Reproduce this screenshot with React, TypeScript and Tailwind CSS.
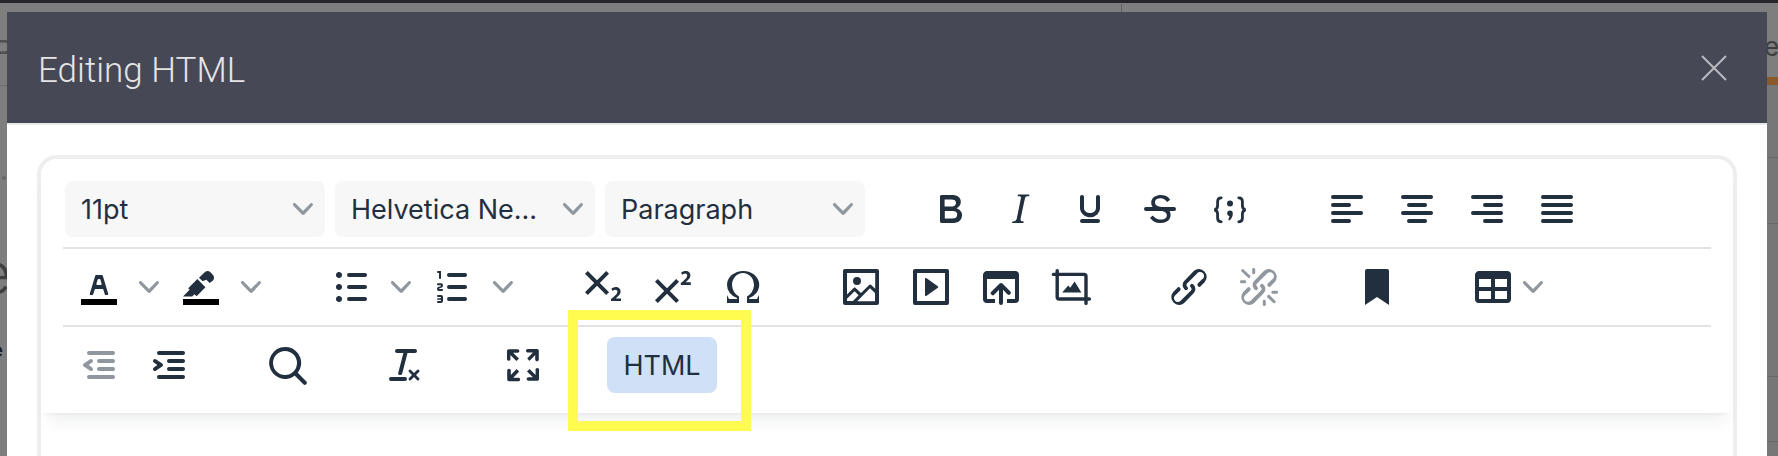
import type { ReactNode } from "react";

const sans = "font-['Inter',sans-serif]";

// toolbar icons, 24 unit grid drawn at 48px
const icons: Record<string, ReactNode> = {
  bold: <path fillRule="evenodd" d="M7.8 19c-.3 0-.5 0-.6-.2l-.2-.5V5.7c0-.2 0-.4.2-.5l.6-.2h5c1.5 0 2.7.3 3.5 1 .7.6 1.1 1.4 1.1 2.5a3 3 0 0 1-.6 1.9c-.4.6-1 1-1.6 1.2.4.1.9.3 1.3.6s.8.7 1 1.2c.4.4.5 1 .5 1.6 0 1.3-.4 2.3-1.3 3-.8.7-2.1 1-3.8 1H7.8Zm5-8.3c.6 0 1.2-.1 1.6-.5.4-.3.6-.7.6-1.3 0-1.1-.8-1.7-2.3-1.7H9.3v3.5h3.4Zm.5 6c.7 0 1.3-.1 1.7-.4.4-.4.6-.9.6-1.5s-.2-1-.7-1.4c-.4-.3-1-.4-2-.4H9.4v3.8h4Z" />,
  italic: <path fillRule="evenodd" d="m16.7 4.7-.1.9h-.3c-.6 0-1 0-1.4.3-.3.3-.4.6-.5 1.1l-2.1 9.8v.6c0 .5.4.8 1.4.8h.2l-.2.8H8l.2-.8h.2c1.1 0 1.8-.5 2-1.5l2-9.8.1-.5c0-.6-.4-.8-1.4-.8h-.3l.2-.9h5.8Z" />,
  underline: <path fillRule="evenodd" d="M16 5c.6 0 1 .4 1 1v5.5a4 4 0 0 1-.4 1.8l-1 1.4a5.3 5.3 0 0 1-5.5 1 5 5 0 0 1-1.6-1c-.5-.4-.8-.9-1.1-1.4a4 4 0 0 1-.4-1.8V6c0-.6.4-1 1-1s1 .4 1 1v5.5c0 .3 0 .6.2 1l.6.7a3.3 3.3 0 0 0 2.2.8 3.4 3.4 0 0 0 2.2-.8c.3-.2.4-.5.6-.8l.2-.9V6c0-.6.4-1 1-1ZM8 17h8c.6 0 1 .4 1 1s-.4 1-1 1H8a1 1 0 0 1 0-2Z" />,
  strike: (
    <>
      <path d="M15.6 8.5c-.5-.7-1-1.1-1.3-1.3-.6-.4-1.3-.6-2-.6-2.7 0-2.8 1.7-2.8 2.1 0 1.6 1.8 2 3.2 2.3 4.4.9 4.6 2.8 4.6 3.9 0 1.4-.7 4.1-5 4.1A6.2 6.2 0 0 1 7 16.4l1.5-1.1c.4.6 1.6 2 3.7 2 1.6 0 2.5-.4 3-1.2.4-.8.3-2-.8-2.6-.7-.4-1.6-.7-2.9-1-1-.2-3.9-.8-3.9-3.6C7.6 6 10.3 5 12.4 5c2.9 0 4.2 1.6 4.7 2.4l-1.5 1.1Z" />
      <path d="M5 11h14a1 1 0 0 1 0 2H5a1 1 0 0 1 0-2Z" />
    </>
  ),
  code: (
    <>
      <path fill="none" stroke="currentColor" strokeWidth="1.4" strokeLinecap="round" d="M7.6 6.4C6.3 6.4 5.8 7.2 5.8 8.3v2c0 1-.6 1.9-1.6 2.100 1 .2 1.6 1.100 1.600 2.100v2c0 1.100.5 1.900 1.800 1.900M16.400 6.400c1.300 0 1.800.8 1.800 1.900v2c0 1 .6 1.900 1.600 2.100-1 .2-1.600 1.100-1.600 2.100v2c0 1.100-.5 1.900-1.800 1.900" />
      <circle cx="12" cy="9.300" r="1.500" />
      <path d="M10.600 14.200a1.400 1.400 0 0 1 2.800 0c0 1.500-.7 2.700-1.700 3.500l-.6-.5c.4-.5.6-1.100.6-1.700-.6-.1-1.100-.6-1.100-1.300Z" />
    </>
  ),
  alignLeft: <path d="M5 5h14c.6 0 1 .4 1 1s-.4 1-1 1H5a1 1 0 1 1 0-2Zm0 4h8c.6 0 1 .4 1 1s-.4 1-1 1H5a1 1 0 1 1 0-2Zm0 8h8c.6 0 1 .4 1 1s-.4 1-1 1H5a1 1 0 0 1 0-2Zm0-4h14c.6 0 1 .4 1 1s-.4 1-1 1H5a1 1 0 0 1 0-2Z" />,
  alignCenter: <path d="M5 5h14c.6 0 1 .4 1 1s-.4 1-1 1H5a1 1 0 1 1 0-2Zm3 4h8c.6 0 1 .4 1 1s-.4 1-1 1H8a1 1 0 1 1 0-2Zm0 8h8c.6 0 1 .4 1 1s-.4 1-1 1H8a1 1 0 0 1 0-2Zm-3-4h14c.6 0 1 .4 1 1s-.4 1-1 1H5a1 1 0 0 1 0-2Z" />,
  alignRight: <path d="M5 5h14c.6 0 1 .4 1 1s-.4 1-1 1H5a1 1 0 1 1 0-2Zm6 4h8c.6 0 1 .4 1 1s-.4 1-1 1h-8a1 1 0 0 1 0-2Zm0 8h8c.6 0 1 .4 1 1s-.4 1-1 1h-8a1 1 0 0 1 0-2Zm-6-4h14c.6 0 1 .4 1 1s-.4 1-1 1H5a1 1 0 0 1 0-2Z" />,
  alignJustify: <path d="M5 5h14c.6 0 1 .4 1 1s-.4 1-1 1H5a1 1 0 1 1 0-2Zm0 4h14c.6 0 1 .4 1 1s-.4 1-1 1H5a1 1 0 1 1 0-2Zm0 4h14c.6 0 1 .4 1 1s-.4 1-1 1H5a1 1 0 0 1 0-2Zm0 4h14c.6 0 1 .4 1 1s-.4 1-1 1H5a1 1 0 0 1 0-2Z" />,
  textColor: (
    <>
      <path fill="#000" d="M3 18h18v3H3z" />
      <path fillRule="evenodd" d="M8.7 16h-.8a.5.5 0 0 1-.5-.6l2.7-9c.1-.3.3-.4.5-.4h2.8c.2 0 .4.1.5.4l2.7 9a.5.5 0 0 1-.5.6h-.8a.5.5 0 0 1-.4-.4l-.7-2.2c0-.3-.3-.4-.5-.4h-3.4c-.2 0-.4.1-.5.4l-.7 2.2c0 .3-.2.4-.4.4Zm2.6-7.6-.6 2a.5.5 0 0 0 .5.6h1.6a.5.5 0 0 0 .5-.6l-.6-2c0-.3-.3-.4-.5-.4h-.4c-.2 0-.4.1-.5.4Z" />
    </>
  ),
  highlight: (
    <>
      <path fill="#000" d="M3 18h18v3H3z" />
      <path d="M7.7 16.7H3l3.3-3.3-.7-.8L10.2 8l4 4.1-4 4.2c-.2.2-.6.2-.8 0l-.7-.7-1 1v.1Zm5-7.7L11 7.4l3-2.9a2 2 0 0 1 2.6 0L18 6c.7.7.7 2 0 2.7L16.3 10l-1.6-1.6L13 9Z" />
    </>
  ),
  bullets: <path fillRule="evenodd" d="M11 5h8c.6 0 1 .4 1 1s-.4 1-1 1h-8a1 1 0 0 1 0-2Zm0 6h8c.6 0 1 .4 1 1s-.4 1-1 1h-8a1 1 0 0 1 0-2Zm0 6h8c.6 0 1 .4 1 1s-.4 1-1 1h-8a1 1 0 0 1 0-2ZM4.5 6c0-.4.1-.8.4-1 .3-.4.7-.5 1.1-.5s.8.1 1 .4c.4.3.5.7.5 1.1s-.1.8-.4 1c-.3.4-.7.5-1.1.5s-.8-.1-1-.4c-.4-.3-.5-.7-.5-1.1Zm0 6c0-.4.1-.8.4-1 .3-.4.7-.5 1.1-.5s.8.1 1 .4c.4.3.5.7.5 1.1s-.1.8-.4 1c-.3.4-.7.5-1.1.5s-.8-.1-1-.4c-.4-.3-.5-.7-.5-1.1Zm0 6c0-.4.1-.8.4-1 .3-.4.7-.5 1.1-.5s.8.1 1 .4c.4.3.5.7.5 1.1s-.1.8-.4 1c-.3.4-.7.5-1.1.5s-.8-.1-1-.4c-.4-.3-.5-.7-.5-1.1Z" />,
  numbers: <path fillRule="evenodd" d="M10 17h8c.6 0 1 .4 1 1s-.4 1-1 1h-8a1 1 0 0 1 0-2Zm0-6h8c.6 0 1 .4 1 1s-.4 1-1 1h-8a1 1 0 0 1 0-2Zm0-6h8c.6 0 1 .4 1 1s-.4 1-1 1h-8a1 1 0 1 1 0-2ZM6 4v3.5c0 .3-.2.5-.5.5a.5.5 0 0 1-.5-.5V5h-.5a.5.5 0 0 1 0-1H6Zm-1 8.8.2.2h1.3c.3 0 .5.2.5.5s-.2.5-.5.5H4.9a1 1 0 0 1-.9-1V13c0-.4.3-.8.6-1l1.2-.4.2-.3a.2.2 0 0 0-.2-.2H4.5a.5.5 0 0 1-.5-.5c0-.3.2-.5.5-.5h1.6c.5 0 .9.4.9 1v.1c0 .4-.3.8-.6 1l-1.2.4-.2.3ZM7 17v2c0 .6-.4 1-1 1H4.5a.5.5 0 0 1 0-1h1.2c.2 0 .3-.1.3-.3 0-.2-.1-.3-.3-.3H4.4a.4.4 0 1 1 0-.8h1.3c.2 0 .3-.1.3-.3 0-.2-.1-.3-.3-.3H4.5a.5.5 0 1 1 0-1H6c.6 0 1 .4 1 1Z" />,
  subscript: <path d="m10.4 10 4.6 4.6-1.4 1.4L9 11.4 4.4 16 3 14.6 7.6 10 3 5.4 4.4 4 9 8.6 13.6 4 15 5.4 10.4 10ZM21 19h-5v-1l1-.8 1.7-1.6c.3-.4.5-.8.5-1.2 0-.3 0-.6-.2-.7-.2-.2-.5-.3-.9-.3a2 2 0 0 0-.8.2l-.7.3-.4-1.1 1-.6 1.2-.2c.8 0 1.4.3 1.8.7.4.4.6.9.6 1.5s-.2 1.1-.5 1.6a8 8 0 0 1-1.3 1.3l-.6.6h2.6V19Z" />,
  superscript: <path d="M15 9.4 10.4 14l4.6 4.6-1.4 1.4L9 15.4 4.4 20 3 18.6 7.6 14 3 9.4 4.4 8 9 12.6 13.6 8 15 9.4Zm5.9 1.6h-5v-1l1-.8 1.7-1.6c.3-.5.5-.9.5-1.3 0-.3 0-.5-.2-.7-.2-.2-.5-.3-.9-.3l-.8.2-.7.4-.4-1.2c.2-.2.5-.4 1-.5.3-.2.8-.2 1.2-.2.8 0 1.4.2 1.8.6.4.4.6 1 .6 1.6 0 .5-.2 1-.5 1.5l-1.3 1.4-.6.5h2.6V11Z" />,
  omega: <path fillRule="evenodd" d="M15 18h4l1-2v4h-6v-3.3l1.4-1a6 6 0 0 0 1.8-2.9 6.3 6.3 0 0 0-.1-4.1 5.8 5.8 0 0 0-3-3.2c-.6-.3-1.3-.5-2.1-.5a5.1 5.1 0 0 0-3.9 1.8 6.3 6.3 0 0 0-1.3 6 6.2 6.2 0 0 0 1.8 3l1.4.9V20H4v-4l1 2h4v-.5l-2-1L5.4 15A6.5 6.5 0 0 1 4 11c0-1 .2-1.9.6-2.7A7 7 0 0 1 6.3 6C7.1 5.4 8 5 9 4.5c1-.3 2-.5 3.1-.5a8.8 8.8 0 0 1 5.7 2 7 7 0 0 1 1.7 2.3 6 6 0 0 1 .2 4.8c-.2.7-.6 1.3-1 1.9a7.6 7.6 0 0 1-3.6 2.5v.5Z" />,
  image: <path d="m5 15.7 3.3-3.2c.3-.3.7-.3 1 0L12 15l4.1-4c.3-.4.8-.4 1 0l2 1.9V5H5v10.7ZM5 18V19h3l2.8-2.9-2-2L5 17.9Zm14-3-2.5-2.4-6.4 6.5H19v-4ZM4 3h16c.6 0 1 .4 1 1v16c0 .6-.4 1-1 1H4a1 1 0 0 1-1-1V4c0-.6.4-1 1-1Zm6 8a2 2 0 1 0 0-4 2 2 0 0 0 0 4Z" />,
  media: <path d="M4 3h16c.6 0 1 .4 1 1v16c0 .6-.4 1-1 1H4a1 1 0 0 1-1-1V4c0-.6.4-1 1-1Zm1 2v14h14V5H5Zm4.8 2.6 5.6 4a.5.5 0 0 1 0 .8l-5.6 4A.5.5 0 0 1 9 16V8a.5.5 0 0 1 .8-.4Z" />,
  browse: <path d="M19 4a2 2 0 0 1 2 2v12a2 2 0 0 1-2 2h-4v-2h4V8H5v10h4v2H5a2 2 0 0 1-2-2V6c0-1.1.9-2 2-2h14Zm-8 9.4-2.3 2.3a1 1 0 1 1-1.4-1.4l4-4a1 1 0 0 1 1.4 0l4 4a1 1 0 0 1-1.4 1.4L13 13.4V20a1 1 0 0 1-2 0v-6.6Z" />,
  crop: (
    <>
      <path fill="none" stroke="currentColor" strokeWidth="1.7" strokeLinecap="round" strokeLinejoin="round" d="M3.2 5.7h15.3a1 1 0 0 1 1 1v13.5M5.100 3.800V17a1 1 0 0 0 1 1h15.100" />
      <path d="m7.6 14.8 3-3.6 1 1.2 2.2-3.2 3.4 5.6H7.6Z" />
    </>
  ),
  link: <path d="M6.2 12.3a1 1 0 0 1 1.4 1.4l-2 2a2 2 0 1 0 2.6 2.8l4.8-4.8a1 1 0 0 0 0-1.4 1 1 0 1 1 1.4-1.3 2.9 2.9 0 0 1 0 4L9.6 20a3.9 3.9 0 0 1-5.5-5.5l2-2Zm11.6-.6a1 1 0 0 1-1.4-1.4l2-2a2 2 0 1 0-2.6-2.8L11 10.3a1 1 0 0 0 0 1.4A1 1 0 1 1 9.6 13a2.9 2.9 0 0 1 0-4L14.4 4a3.9 3.9 0 0 1 5.5 5.5l-2 2Z" />,
  unlink: <path d="M6.2 12.3a1 1 0 0 1 1.4 1.4l-2.1 2a2 2 0 1 0 2.7 2.8l4.8-4.8a1 1 0 0 0 0-1.4 1 1 0 1 1 1.4-1.3 2.9 2.9 0 0 1 0 4L9.6 20a3.9 3.9 0 0 1-5.5-5.5l2-2Zm11.6-.6a1 1 0 0 1-1.4-1.4l2.1-2a2 2 0 1 0-2.7-2.8L11 10.3a1 1 0 0 0 0 1.4A1 1 0 1 1 9.6 13a2.9 2.9 0 0 1 0-4L14.4 4a3.9 3.9 0 0 1 5.5 5.5l-2 2ZM7.6 6.3a.8.8 0 0 1-1 1.1L3.3 4.2a.7.7 0 1 1 1-1l3.2 3.1ZM5.1 8.6a.8.8 0 0 1 0 1.5H3a.8.8 0 0 1 0-1.5H5Zm5-3.5a.8.8 0 0 1-1.5 0V3a.8.8 0 0 1 1.5 0v2Zm6 11.8a.8.8 0 0 1 1-1l3.2 3.2a.8.8 0 0 1-1 1L16 17Zm-2.2 2a.8.8 0 0 1 1.5 0V21a.8.8 0 0 1-1.5 0V19Zm5-3.5a.7.7 0 1 1 0-1.5H21a.8.8 0 0 1 0 1.5H19Z" />,
  bookmark: <path d="M6 4v17l6-4 6 4V4c0-.6-.4-1-1-1H7a1 1 0 0 0-1 1Z" />,
  table: <path d="M19 4a2 2 0 0 1 2 2v12a2 2 0 0 1-2 2H5a2 2 0 0 1-2-2V6c0-1.1.9-2 2-2h14ZM5 14v4h6v-4H5Zm14 0h-6v4h6v-4Zm0-6h-6v4h6V8ZM5 12h6V8H5v4Z" />,
  outdent: <path fillRule="evenodd" d="M7 5h12c.6 0 1 .4 1 1s-.4 1-1 1H7a1 1 0 1 1 0-2Zm5 4h7c.6 0 1 .4 1 1s-.4 1-1 1h-7a1 1 0 0 1 0-2Zm0 4h7c.6 0 1 .4 1 1s-.4 1-1 1h-7a1 1 0 0 1 0-2Zm-5 4h12a1 1 0 0 1 0 2H7a1 1 0 0 1 0-2Zm1.6-3.8a1 1 0 0 1-1.2 1.6l-3-2a1 1 0 0 1 0-1.6l3-2a1 1 0 0 1 1.2 1.6L6.8 12l1.8 1.2Z" />,
  indent: <path fillRule="evenodd" d="M7 5h12c.6 0 1 .4 1 1s-.4 1-1 1H7a1 1 0 1 1 0-2Zm5 4h7c.6 0 1 .4 1 1s-.4 1-1 1h-7a1 1 0 0 1 0-2Zm0 4h7c.6 0 1 .4 1 1s-.4 1-1 1h-7a1 1 0 0 1 0-2Zm-5 4h12a1 1 0 0 1 0 2H7a1 1 0 0 1 0-2Zm-2.6-3.8L6.2 12l-1.8-1.2a1 1 0 0 1 1.2-1.6l3 2a1 1 0 0 1 0 1.6l-3 2a1 1 0 1 1-1.2-1.6Z" />,
  search: <path d="M16 17.3a8 8 0 1 1 1.4-1.4l4.3 4.4a1 1 0 0 1-1.4 1.4l-4.4-4.3Zm-5-.3a6 6 0 1 0 0-12 6 6 0 0 0 0 12Z" />,
  clear: <path fillRule="evenodd" d="M13.2 6a1 1 0 0 1 0 .2l-2.6 10a1 1 0 0 1-1 .8h-.2a.8.8 0 0 1-.8-1l2.6-10H8a1 1 0 1 1 0-2h9a1 1 0 0 1 0 2h-3.8ZM5 18h7a1 1 0 0 1 0 2H5a1 1 0 0 1 0-2Zm13 1.5L16.5 18 15 19.5a.7.7 0 0 1-1-1l1.5-1.5-1.5-1.5a.7.7 0 0 1 1-1l1.5 1.5 1.5-1.5a.7.7 0 0 1 1 1L17.5 17l1.5 1.5a.7.7 0 0 1-1 1Z" />,
  fullscreen: <path d="m15.3 10-1.2-1.3 2.9-3h-2.3a.9.9 0 1 1 0-1.7H19c.5 0 .9.4.9.9v4.4a.9.9 0 1 1-1.8 0V7l-2.9 3Zm0 4 3 3v-2.3a.9.9 0 1 1 1.7 0V19c0 .5-.4.9-.9.9h-4.4a.9.9 0 1 1 0-1.8H17l-3-2.9 1.3-1.2ZM10 15.4l-2.9 3h2.3a.9.9 0 1 1 0 1.7H5a.9.9 0 0 1-.9-.9v-4.4a.9.9 0 1 1 1.8 0V17l2.9-3 1.2 1.3ZM8.7 10 5.7 7v2.3a.9.9 0 0 1-1.7 0V5c0-.5.4-.9.9-.9h4.4a.9.9 0 0 1 0 1.8H7l3 2.9-1.3 1.2Z" />,
};

const Chevron = () => (
  <svg viewBox="0 0 10 10" className="w-5 h-5 fill-[#91979e]">
    <path d="M8.7 2.2c.3-.3.8-.3 1 0 .4.4.4.9 0 1.2L5.7 7.8c-.3.3-.9.3-1.2 0L.2 3.4a.8.8 0 0 1 0-1.2c.3-.3.8-.3 1.1 0L5 6l3.7-3.8Z" />
  </svg>
);

const Btn = ({ name, off }: { name: string; off?: boolean }) => (
  <div className={`w-[70px] h-[56px] flex items-center justify-center shrink-0 ${off ? "text-[#91979e]" : "text-[#222f3e]"}`}>
    <svg viewBox="0 0 24 24" className="w-12 h-12 fill-current">
      {icons[name]}
    </svg>
  </div>
);

const Split = ({ name }: { name: string }) => (
  <div className="flex items-center">
    <Btn name={name} />
    <div className="w-[30px] flex justify-center">
      <Chevron />
    </div>
  </div>
);

const Select = ({ label }: { label: string }) => (
  <div className="w-[260px] h-[56px] bg-[#f7f7f7] rounded-lg pl-4 pr-3 flex items-center justify-between text-[27px] text-[#222f3e]">
    <span className="pt-[2px]">{label}</span>
    <Chevron />
  </div>
);

const App = () => {
  return (
    <div className={`relative w-full h-screen overflow-hidden bg-[#7e7e7e] ${sans}`}>
      {/* page behind the backdrop, only slivers show */}
      <span className="absolute left-[-6px] top-[36px] text-[30px] leading-none text-[#4f4f4f]">P</span>
      <div className="absolute left-0 top-[85px] w-[7px] h-px bg-[#6c6c6c]"></div>
      <div className="absolute left-[2px] top-[176px] w-[4px] h-[4px] rounded-full bg-[#6a6a6a]"></div>
      <span className="absolute left-[-22px] top-[244px] text-[58px] font-light leading-none text-[#3f3f3f]">e</span>
      <span className="absolute left-[-9px] top-[340px] text-[20px] font-bold leading-none text-[#1e1e1e]">e</span>
      <span className="absolute left-[1764px] top-[34px] text-[26px] leading-none text-[#3d3d3d]">es</span>
      <div className="absolute right-0 top-[77px] w-[11px] h-[8px] bg-[#8b5a2b]"></div>
      <div className="absolute right-0 top-[85px] bottom-0 w-[11px] bg-[#777777]"></div>
      <div className="absolute right-0 top-[157px] w-[11px] h-px bg-[#686868]"></div>
      <div className="absolute right-0 top-[223px] w-[11px] h-px bg-[#686868]"></div>
      <div className="absolute right-0 top-[376px] w-[11px] h-px bg-[#686868]"></div>
      <div className="absolute right-0 top-[441px] w-[11px] h-px bg-[#686868]"></div>
      <div className="absolute left-[1121px] top-[4px] w-px h-[8px] bg-[#606060]"></div>

      <div className="relative h-[3px] bg-[#25252e]"></div>

      {/* Modal */}
      <div className="relative mt-[9px] ml-[7px] mr-[11px] h-[444px] flex flex-col bg-white">
        <div className="h-[113px] shrink-0 bg-[#464855] border-b-2 border-[#e9e9ec] pl-[31px] pr-[40px] flex items-center justify-between">
          <h1 className="font-['Roboto',sans-serif] font-light text-[35px] text-[#e4e4e7] pt-2">Editing HTML</h1>
          <svg viewBox="0 0 26 26" className="w-[26px] h-[26px] stroke-[#b9babf]" strokeWidth="2">
            <path d="M1 1l24 24M25 1 1 25" />
          </svg>
        </div>

        <div className="flex-1 px-[30px] pt-[30px] flex flex-col">
          {/* Editor */}
          <div className="flex-1 border-[4px] border-b-0 border-[#eeeeee] rounded-t-[20px]">
            <div className="bg-white rounded-t-[16px] px-[22px] pt-3 pb-[10px] shadow-[0_4px_4px_-4px_rgba(34,47,62,0.1),0_16px_16px_-8px_rgba(34,47,62,0.07)]">
              <div className="h-[78px] border-b-2 border-[#e3e3e3] flex items-center pl-px">
                <div className="flex gap-[10px] ml-px">
                  <Select label="11pt" />
                  <Select label="Helvetica Ne..." />
                  <Select label="Paragraph" />
                </div>
                <div className="flex ml-[50px]">
                  <Btn name="bold" />
                  <Btn name="italic" />
                  <Btn name="underline" />
                  <Btn name="strike" />
                  <Btn name="code" />
                </div>
                <div className="flex ml-[47px]">
                  <Btn name="alignLeft" />
                  <Btn name="alignCenter" />
                  <Btn name="alignRight" />
                  <Btn name="alignJustify" />
                </div>
              </div>

              <div className="h-[78px] border-b-2 border-[#e3e3e3] flex items-center pl-px">
                <div className="flex gap-[2px]">
                  <Split name="textColor" />
                  <Split name="highlight" />
                </div>
                <div className="flex gap-[2px] ml-[50px]">
                  <Split name="bullets" />
                  <Split name="numbers" />
                </div>
                <div className="flex ml-[50px]">
                  <Btn name="subscript" />
                  <Btn name="superscript" />
                  <Btn name="omega" />
                </div>
                <div className="flex ml-[48px]">
                  <Btn name="image" />
                  <Btn name="media" />
                  <Btn name="browse" />
                  <Btn name="crop" />
                </div>
                <div className="flex ml-[48px]">
                  <Btn name="link" />
                  <Btn name="unlink" off />
                </div>
                <div className="ml-[48px]">
                  <Btn name="bookmark" />
                </div>
                <div className="flex items-center ml-[46px]">
                  <Btn name="table" />
                  <div className="-ml-[10px] w-[30px] flex justify-center">
                    <Chevron />
                  </div>
                </div>
              </div>

              <div className="h-[76px] flex items-center pl-px">
                <div className="flex">
                  <Btn name="outdent" off />
                  <Btn name="indent" />
                </div>
                <div className="ml-[48px]">
                  <Btn name="search" />
                </div>
                <div className="ml-[48px]">
                  <Btn name="clear" />
                </div>
                <div className="ml-[48px]">
                  <Btn name="fullscreen" />
                </div>
                <div className="relative ml-[49px] w-[110px] h-[56px] rounded-lg bg-[#cfe0f7] flex items-center justify-center text-[27px] text-[#222f3e] pt-[2px]">
                  HTML
                  {/* yellow callout drawn over the screenshot */}
                  <div className="absolute left-[-39px] right-[-34px] top-[-27px] bottom-[-38px] border-[10px] border-[#fffb4f]"></div>
                </div>
              </div>
            </div>
          </div>
        </div>
      </div>
    </div>
  );
};

export default App;
